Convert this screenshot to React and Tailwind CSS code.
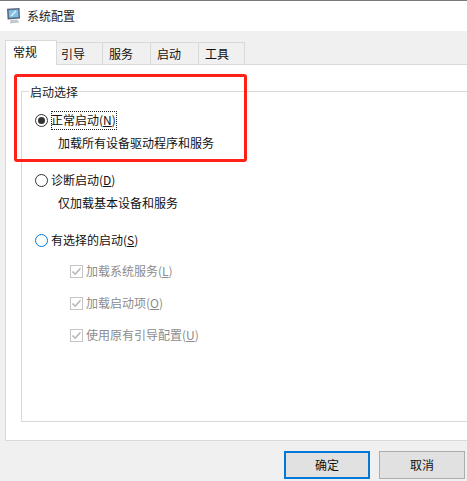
const Tab = ({ label, active, w, pad }) => (
  <div
    className={
      active
        ? 'relative z-10 h-[25px] w-[52px] border border-b-0 border-[#d9d9d9] bg-white pl-[7px] pt-[1px] text-[12px] leading-[19px]'
        : `-ml-px mt-[2px] h-[23px] border border-[#d9d9d9] bg-[#f0f0f0] pt-[1px] text-[12px] leading-[19px] ${w} ${pad}`
    }
  >
    {label}
  </div>
);

const Radio = ({ checked, blue, label, hot, focus }) => (
  <div className="flex h-[19px] items-center">
    <span
      className={`flex h-[13px] w-[13px] shrink-0 items-center justify-center rounded-full border bg-white ${
        blue ? 'border-[#0078d7]' : 'border-[#333333]'
      }`}
    >
      {checked && <span className="h-[7px] w-[7px] rounded-full bg-[#333333]" />}
    </span>
    <span
      className={`ml-[3px] h-[19px] pr-px text-[12px] leading-[18px] text-[#111111] ${
        focus ? 'outline-1 -outline-offset-1 outline-dotted outline-[#222222]' : ''
      }`}
    >
      {label}(<span className="underline">{hot}</span>)
    </span>
  </div>
);

const Check = ({ label, hot }) => (
  <div className="flex h-[18px] items-center">
    <svg width="13" height="13" viewBox="0 0 13 13" className="shrink-0">
      <rect x="0.5" y="0.5" width="12" height="12" fill="#ffffff" stroke="#c4c4c4" />
      <path d="M2.5 6.5 L5.2 9.3 L10.5 3.2" fill="none" stroke="#b4b4b4" strokeWidth="1.4" />
    </svg>
    <span className="ml-[3px] text-[12px] leading-[16px] text-[#8c8c8c]">
      {label}(<span className="underline">{hot}</span>)
    </span>
  </div>
);

const Btn = ({ label, primary }) => (
  <div
    className={`flex h-[28px] w-[86px] items-center justify-center bg-[#e1e1e1] text-[12px] text-[#111111] ${
      primary ? 'border-2 border-[#0078d7]' : 'border border-[#adadad]'
    }`}
  >
    {label}
  </div>
);

const PcIcon = () => (
  <svg width="14" height="16" viewBox="0 0 14 16" className="shrink-0">
    <path d="M0 0.8 L12.5 0 L13 10.5 L0.6 11.5 Z" fill="#59657c" />
    <path d="M1.6 2.2 L11.2 1.6 L11.6 9 L2 9.8 Z" fill="#7fc0e4" />
    <path d="M4 8 L9 3" stroke="#e8f6fc" strokeWidth="1.2" />
    <path d="M3.5 12 L10 11.6 L12.5 14.5 L3 15.5 Z" fill="#c3c8cf" />
  </svg>
);

export default function App() {
  return (
    <div
      className="relative flex h-[481px] w-[467px] flex-col overflow-hidden bg-[#f0f0f0] text-[#111111]"
      style={{ fontFamily: '"Noto Sans CJK SC", "Noto Sans", sans-serif' }}
    >
      <div className="h-px bg-[#7a7a7a]" />
      <div className="flex h-[30px] items-center bg-white pl-[7px]">
        <PcIcon />
        <span className="ml-[6px] text-[12px] text-[#222222]">系统配置</span>
      </div>

      <div className="flex flex-1 flex-col pl-[5px] pt-[9px]">
        <div className="flex h-[24px] items-start">
          <Tab label="常规" active />
          <Tab label="引导" w="w-[47px]" pad="pl-[4px]" />
          <Tab label="服务" w="w-[49px]" pad="pl-[6px]" />
          <Tab label="启动" w="w-[49px]" pad="pl-[6px]" />
          <Tab label="工具" w="w-[47px]" pad="pl-[6px]" />
        </div>

        <div className="h-[377px] border-y border-l border-[#d9d9d9] bg-white pl-[15px] pt-[26px]">
          <div className="relative h-[331px] border-y border-l border-[#d9d9d9] pl-[13px] pt-[19px]">
            <span className="absolute -top-[8px] left-[7px] bg-white px-px text-[12px] leading-[16px] text-[#222222]">
              启动选择
            </span>
            <Radio checked label="正常启动" hot="N" focus />
            <div className="ml-[23px] mt-[4px] text-[12px] leading-[18px] text-[#111111]">
              加载所有设备驱动程序和服务
            </div>

            <div className="mt-[19px]">
              <Radio label="诊断启动" hot="D" />
            </div>
            <div className="ml-[23px] mt-[4px] text-[12px] leading-[18px] text-[#111111]">
              仅加载基本设备和服务
            </div>

            <div className="mt-[19px]">
              <Radio blue label="有选择的启动" hot="S" />
            </div>
            <div className="ml-[35px] mt-[12px] flex flex-col gap-[14px]">
              <Check label="加载系统服务" hot="L" />
              <Check label="加载启动项" hot="O" />
              <Check label="使用原有引导配置" hot="U" />
            </div>
          </div>
        </div>

        <div className="flex flex-1 items-start justify-end gap-[9px] pr-[2px] pt-[10px]">
          <Btn label="确定" primary />
          <Btn label="取消" />
        </div>
      </div>

      <div className="absolute left-[14px] top-[74px] h-[88px] w-[233px] rounded-[3px] border-[3px] border-[#ff2018]" />
    </div>
  );
}
